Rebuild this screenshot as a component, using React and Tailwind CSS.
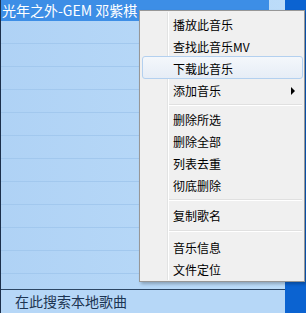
import React from 'react';

const groups = [
  ['播放此音乐', '查找此音乐MV', '下载此音乐', '添加音乐'],
  ['删除所选', '删除全部', '列表去重', '彻底删除'],
  ['复制歌名'],
  ['音乐信息', '文件定位'],
];

const rows = Array.from({ length: 11 });

function MenuItem({ label }) {
  const active = label === '下载此音乐';
  const sub = label === '添加音乐';
  return (
    <div className="relative h-[22px] flex items-center">
      {active && (
        <div className="absolute left-[2px] right-[1px] -top-[1px] bottom-0 rounded-[3px] border border-[#b3d0ef] bg-gradient-to-b from-[#f4f7fb] to-[#e6edf6]" />
      )}
      <span className="relative pl-[33px] pt-[2px] text-[12px] text-black leading-none">{label}</span>
      {sub && (
        <span className="absolute right-[9px] top-[8px] w-0 h-0 border-y-[4px] border-y-transparent border-l-[4px] border-l-black" />
      )}
    </div>
  );
}

function Separator({ h }) {
  return (
    <div className={`flex items-center pl-[29px] pr-[2px] ${h}`}>
      <div className="w-full border-t border-[#e0e0e0] border-b border-b-white" />
    </div>
  );
}

export default function App() {
  return (
    <div className="relative w-[306px] h-[313px] overflow-hidden flex font-['Noto_Sans_CJK_SC','Noto_Sans',sans-serif]">
      <div className="w-[285px] flex flex-col border-l border-[#1c2f4a] bg-gradient-to-r from-[#afd2f5] to-[#bcdcf9]">
        <div className="h-[21px] flex">
          <div className="w-[268px] bg-[#3d8ee6] text-white text-[14px] leading-[20px] pl-[1px] whitespace-nowrap overflow-hidden">
            光年之外-GEM 邓紫棋
          </div>
        </div>
        {rows.map((_, i) => (
          <div key={i} className="h-[23px] border-b border-[#a2c8ee] shrink-0" />
        ))}
        <div className="flex-1" />
        <div className="h-[24px] border-t border-[#2c4664] bg-[#b6d7f7] text-[14px] leading-[23px] text-[#1d3552] pl-[14px]">
          在此搜索本地歌曲
        </div>
      </div>
      <div className="flex-1 bg-[#0b63d1]" />

      <div className="absolute left-[139px] top-[10px] w-[166px] h-[272px] bg-[#f0f0f0] border border-[#979797] shadow-[2px_2px_3px_rgba(0,0,0,0.25)] pt-[2px]">
        <div className="absolute left-[27px] top-[1px] bottom-[1px] border-l border-[#e2e3e3] border-r border-r-white" />
        {groups.map((g, gi) => (
          <div key={gi}>
            {gi > 0 && <Separator h={gi === 1 ? 'h-[7px]' : gi === 2 ? 'h-[8px]' : 'h-[10px]'} />}
            {g.map((label) => (
              <MenuItem key={label} label={label} />
            ))}
          </div>
        ))}
      </div>
    </div>
  );
}
